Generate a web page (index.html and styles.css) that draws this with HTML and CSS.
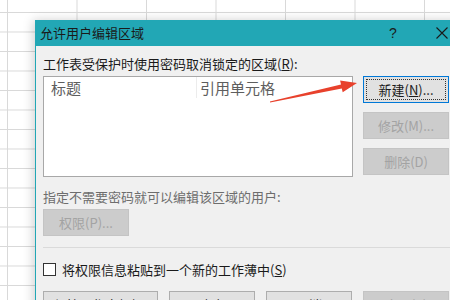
FILE: index.html
```html
<!DOCTYPE html>
<html lang="zh-CN">
<head>
    <meta charset="UTF-8">
    <meta name="viewport" content="width=device-width, initial-scale=1.0">
    <title>允许用户编辑区域</title>
    <link rel="stylesheet" href="styles.css">
</head>
<body>
    <div class="hoja"></div>

    <div class="dialogo">
        <div class="titulo">
            <span class="titulo-texto">允许用户编辑区域</span>
            <span class="ayuda">?</span>
            <span class="cerrar">
                <svg width="12" height="12" viewBox="0 0 12 12">
                    <path d="M0.5 0.5 L11.5 11.5 M11.5 0.5 L0.5 11.5" stroke="#1a1a1a" stroke-width="1.1" fill="none"/>
                </svg>
            </span>
        </div>

        <div class="cuerpo">
            <p class="etiqueta">工作表受保护时使用密码取消锁定的区域(<u>R</u>):</p>
            <div class="fila-lista">
                <div class="lista">
                    <div class="cabecera">
                        <span class="col-titulo">标题</span>
                        <span class="col-ref">引用单元格</span>
                    </div>
                </div>
                <div class="botones">
                    <button class="boton activo">新建(<u>N</u>)...</button>
                    <button class="boton inactivo">修改(M)...</button>
                    <button class="boton inactivo">删除(D)</button>
                </div>
            </div>

            <p class="etiqueta apagada">指定不需要密码就可以编辑该区域的用户:</p>
            <button class="boton inactivo permisos">权限(P)...</button>

            <div class="separador"></div>

            <label class="casilla">
                <span class="caja"></span>
                <span>将权限信息粘贴到一个新的工作薄中(<u>S</u>)</span>
            </label>

            <div class="fila-final">
                <button class="boton ancho">保护工作表(O)...</button>
                <button class="boton">确定</button>
                <button class="boton">取消</button>
                <button class="boton inactivo">应用(A)</button>
            </div>
        </div>
    </div>

    <svg class="flecha" width="450" height="300" viewBox="0 0 450 300">
        <polygon points="269.9,101.5 341.0,84.5 340.1,80.5 357,83 342.7,92.3 341.8,88.4 270.1,102.5" fill="#e8412c"/>
    </svg>
</body>
</html>
```

FILE: styles.css
```css
body {
    margin: 0;
    width: 450px;
    height: 300px;
    overflow: hidden;
    position: relative;
    background-color: #fff;
    font-family: "Noto Sans CJK SC", "Noto Sans", sans-serif;
    font-size: 13px;
    color: #1a1a1a;
}
.hoja {
    position: absolute;
    inset: 0;
    background-image:
        linear-gradient(to right, #d9d9d9 1px, transparent 1px),
        linear-gradient(to bottom, #d9d9d9 1px, transparent 1px);
    background-size: 69.5px 19.5px;
    background-position: 7px 12px;
}
.dialogo {
    position: absolute;
    left: 35px;
    top: 20px;
    width: 440px;
    height: 300px;
    background-color: #f0f0f0;
    border-left: 1px solid #22a7b5;
    box-shadow: -2px 0 10px rgba(0,0,0,0.18);
}
.titulo {
    height: 26px;
    background-color: #22a7b5;
    display: flex;
    align-items: center;
    padding-left: 4px;
}
.titulo-texto {
    flex: 1;
    line-height: 26px;
}
.ayuda {
    width: 14px;
    margin-right: 36px;
    text-align: center;
    font-family: "Liberation Sans", sans-serif;
    font-size: 14px;
}
.cerrar {
    width: 12px;
    height: 12px;
    margin-right: 28px;
    display: flex;
}
.cuerpo {
    padding: 9px 0 0 7px;
}
.etiqueta {
    margin: 0;
    line-height: 17px;
}
.apagada {
    color: #6d6d6d;
    margin-top: 11px;
}
.fila-lista {
    display: flex;
    gap: 10px;
    margin-top: 4px;
}
.lista {
    width: 308px;
    height: 99px;
    background-color: #fff;
    border: 1px solid #a8a8a8;
}
.cabecera {
    display: flex;
    height: 20px;
    align-items: center;
    font-size: 15px;
    color: #5e5e5e;
}
.col-titulo {
    width: 145px;
    padding-left: 7px;
    border-right: 1px solid #ececec;
}
.col-ref {
    padding-left: 3px;
}
.botones {
    display: flex;
    flex-direction: column;
    gap: 9px;
}
.boton {
    width: 86px;
    height: 27px;
    padding: 0;
    font-family: inherit;
    font-size: 13px;
    color: #1a1a1a;
    background-color: #e1e1e1;
    border: 1px solid #adadad;
}
.activo {
    border-color: #0078d7;
    outline: 1px dotted #333;
    outline-offset: -4px;
}
.inactivo {
    background-color: #cccccc;
    border-color: #c4c4c4;
    color: #a3a3a3;
}
.permisos {
    display: block;
    margin-top: 4px;
}
.separador {
    height: 1px;
    background-color: #dadada;
    margin-top: 11px;
}
.casilla {
    display: flex;
    align-items: center;
    gap: 6px;
    margin-top: 13px;
    line-height: 17px;
}
.caja {
    width: 11px;
    height: 11px;
    background-color: #fff;
    border: 1px solid #333;
}
.fila-final {
    display: flex;
    gap: 11px;
    margin-top: 13px;
}
.ancho {
    width: 115px;
}
.flecha {
    position: absolute;
    left: 0;
    top: 0;
}
```
